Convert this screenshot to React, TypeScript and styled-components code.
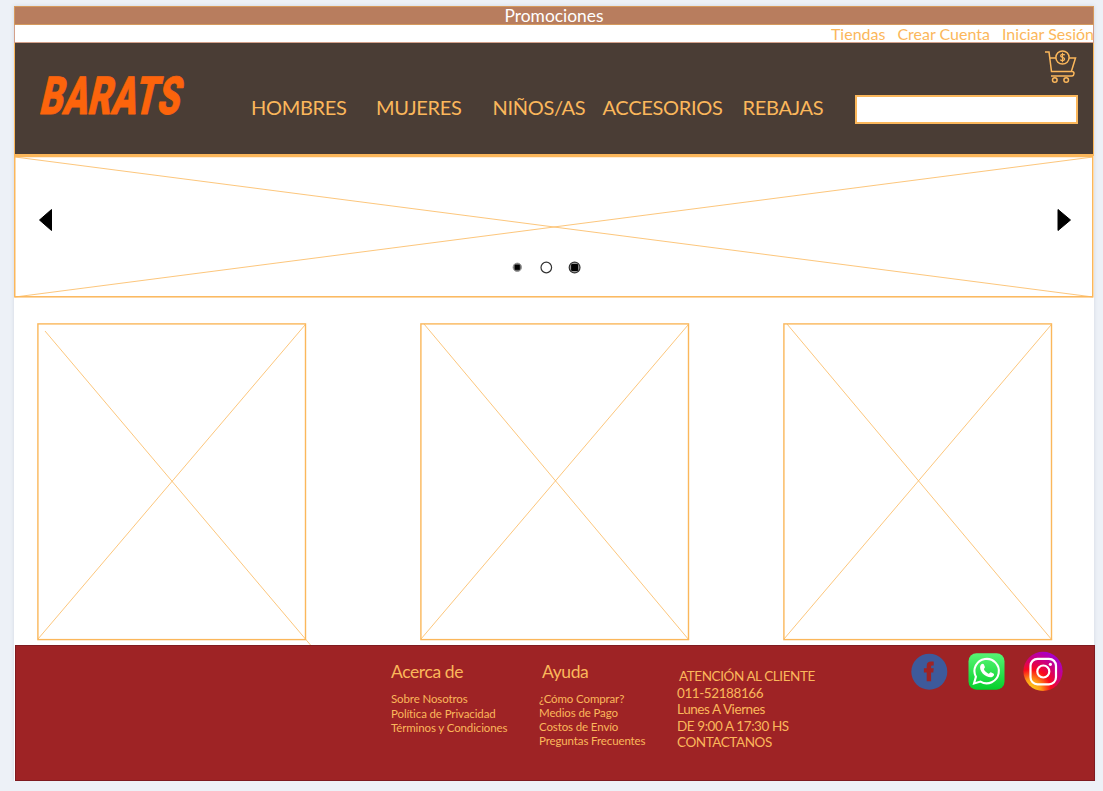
import React from "react";
import styled, { createGlobalStyle } from "styled-components";

const Global = createGlobalStyle`
  * { box-sizing: border-box; }
  body { margin: 0; background: #edf1f7; font-family: Lato, sans-serif; font-variant-ligatures: none; }
`;

const AMBER = "#fbb75b";

const Page = styled.div`
  width: 1080px;
  height: 775px;
  margin: 6px 0 0 14px;
  background: #fff;
  box-shadow: 0 0 4px rgba(60, 80, 120, 0.16);
  display: flex;
  flex-direction: column;
`;

const Promo = styled.div`
  height: 19px;
  flex: none;
  background: #b87d5e;
  border: 1px solid #d59a5e;
  color: #fff;
  font-size: 17.4px;
  line-height: 17px;
  text-align: center;
`;

const Account = styled.nav`
  height: 18px;
  flex: none;
  display: flex;
  justify-content: flex-end;
  gap: 12px;
  border: solid #d3a08a;
  border-width: 0 1px 1px 1px;
  color: ${AMBER};
  font-size: 16px;
  line-height: 18px;

  span:last-child {
    margin-right: -1px;
  }
`;

const Header = styled.header`
  height: 113px;
  flex: none;
  display: flex;
  background: #4a3d35;
  border: solid ${AMBER};
  border-width: 0 1px 2px 1px;
  padding: 0 15px 0 22px;
`;

const Logo = styled.svg`
  width: 170px;
  height: 54px;
  margin-top: 25px;
  flex: none;
  overflow: visible;
`;

const Menu = styled.nav`
  display: flex;
  margin: 52px 0 0 44px;
  color: ${AMBER};
  font-size: 20px;
  letter-spacing: -0.3px;
  line-height: 24px;
`;

const MenuItem = styled.a<{ $w: number }>`
  width: ${(p) => p.$w}px;
  flex: none;
  white-space: nowrap;
`;

const Tools = styled.div`
  margin-left: auto;
  display: flex;
  flex-direction: column;
  align-items: flex-end;
  padding-top: 6px;
  gap: 11px;
`;

const Search = styled.input`
  width: 223px;
  height: 29px;
  background: #fff;
  border: 2px solid ${AMBER};
  border-radius: 0;
  outline: none;
`;

const CartIcon = styled.svg`
  width: 34px;
  height: 35px;
`;

const Hero = styled.section`
  height: 142px;
  flex: none;
`;

const HeroArt = styled.svg`
  display: block;
`;

const Gallery = styled.main`
  height: 347px;
  flex: none;
  display: flex;
  padding: 25px 0 0 23px;
`;

const Card = styled.svg<{ $gap: number }>`
  width: 270px;
  height: 318px;
  flex: none;
  overflow: visible;
  margin-right: ${(p) => p.$gap}px;
`;

const Footer = styled.footer`
  width: 1080px;
  height: 136px;
  flex: none;
  margin-left: 1px;
  display: flex;
  background: #9e2325;
  border: 1px solid #7f1b20;
  color: ${AMBER};
  padding-left: 375px;
`;

const Column = styled.div<{ $w: number }>`
  width: ${(p) => p.$w}px;
  flex: none;
  padding-top: 15px;
  white-space: nowrap;
`;

const Title = styled.h2<{ $indent?: number }>`
  margin: 0 0 9px;
  padding-left: ${(p) => p.$indent ?? 0}px;
  font-size: 17.5px;
  font-weight: 400;
  letter-spacing: -0.4px;
  line-height: 22px;
`;

const Links = styled.div<{ $line: number }>`
  font-size: 11.5px;
  letter-spacing: -0.12px;
  line-height: ${(p) => p.$line}px;
`;

const Contact = styled.div`
  width: 234px;
  flex: none;
  padding-top: 22px;
  font-size: 13.5px;
  letter-spacing: -0.42px;
  line-height: 16.5px;
  white-space: nowrap;
`;

const FirstLine = styled.div`
  padding-left: 2px;
`;

const Social = styled.div`
  display: flex;
  gap: 18.5px;
  padding-top: 6px;
`;

const Badge = styled.svg`
  width: 38px;
  height: 40px;
  flex: none;
  overflow: visible;
`;

const menu: [string, number][] = [
  ["HOMBRES", 125],
  ["MUJERES", 116.5],
  ["NIÑOS/AS", 110],
  ["ACCESORIOS", 140],
  ["REBAJAS", 90],
];

const cards = [
  { gap: 113, from: [8, 8], to: [273.5, 322] },
  { gap: 93, from: [4, 1], to: [269, 317] },
  { gap: 0, from: [4, 1], to: [269, 317] },
];

export default function App() {
  return (
    <>
      <Global />
      <Page>
        <Promo>Promociones</Promo>
        <Account>
          <span>Tiendas</span>
          <span>Crear Cuenta</span>
          <span>Iniciar Sesión</span>
        </Account>
        <Header>
          <Logo viewBox="0 0 170 54">
            <text
              transform="translate(1.2 45.8) skewX(-13)"
              fontFamily="Roboto, sans-serif"
              fontWeight="900"
              fontSize="52.5"
              fill="#fc640c"
              stroke="#fc640c"
              strokeWidth="0.8"
              strokeLinejoin="round"
              textLength="140"
              lengthAdjust="spacingAndGlyphs"
            >
              BARATS
            </text>
          </Logo>
          <Menu>
            {menu.map(([label, w]) => (
              <MenuItem key={label} $w={w}>{label}</MenuItem>
            ))}
          </Menu>
          <Tools>
            <CartIcon viewBox="0 0 34 35" fill="none" stroke={AMBER} strokeWidth="1.5">
              <path d="M1 3h4l2.500 19.500h20.500q2 0 2 2t-2 2.500H7M6 9h6M25 9h6.500l-4 13" />
              <circle cx="18.500" cy="8.500" r="6.600" />
              <path d="M20.800 6.200c-1-1.500-4.400-1-4.200.7.2 1.800 4 1.300 4 3.200 0 1.800-3.300 2-4.300.5M18.500 3.800v9.400" strokeWidth="1.200" />
              <circle cx="10.800" cy="31" r="2.300" />
              <circle cx="22.200" cy="31" r="2.300" />
            </CartIcon>
            <Search aria-label="Buscar" />
          </Tools>
        </Header>
        <Hero>
          <HeroArt width="1080" height="142" viewBox="0 0 1080 142">
            <rect x="0.75" y="0.5" width="1078" height="140.3" fill="none" stroke={AMBER} strokeWidth="1.5" />
            <path d="M1 1L1079 141M1 141L1079 1" stroke={AMBER} strokeWidth="0.8" />
            <path d="M25.5 64L37.5 53.500V74.500ZM1056.500 64L1044 53.500V74.500Z" stroke="#000" strokeLinejoin="round" />
            <circle cx="503.3" cy="111.3" r="4.2" fill="#666" stroke="#999" strokeWidth="1" />
            <rect x="500.800" y="108.800" width="5" height="5" />
            <circle cx="532.3" cy="111.5" r="5.3" fill="#fff" stroke="#333" strokeWidth="1.2" />
            <circle cx="560.6" cy="111.5" r="5.4" fill="#999" stroke="#333" strokeWidth="1.2" />
            <rect x="557.1" y="108" width="7" height="7" rx="1" />
          </HeroArt>
        </Hero>
        <Gallery>
          {cards.map((c, i) => (
            <Card key={i} $gap={c.gap} viewBox="0 0 270 318">
              <rect x="0.9" y="0.9" width="267.6" height="315.7" fill="none" stroke={AMBER} strokeWidth="1.4" />
              <path
                d={`M${c.from.join(" ")}L${c.to.join(" ")}M1 316L268 2`}
                stroke={AMBER}
                strokeWidth="0.8"
              />
            </Card>
          ))}
        </Gallery>
        <Footer>
          <Column $w={148}>
            <Title>Acerca de</Title>
            <Links $line={14.5}>
              <div>Sobre Nosotros</div>
              <div>Política de Privacidad</div>
              <div>Términos y Condiciones</div>
            </Links>
          </Column>
          <Column $w={138}>
            <Title $indent={3}>Ayuda</Title>
            <Links $line={14}>
              <div>¿Cómo Comprar?</div>
              <div>Medios de Pago</div>
              <div>Costos de Envío</div>
              <div>Preguntas Frecuentes</div>
            </Links>
          </Column>
          <Contact>
            <FirstLine>ATENCIÓN AL CLIENTE</FirstLine>
            <div>011-52188166</div>
            <div>Lunes A Viernes</div>
            <div>DE 9:00 A 17:30 HS</div>
            <div>CONTACTANOS</div>
          </Contact>
          <Social>
            <Badge viewBox="0 0 38 40">
              <circle cx="18.3" cy="19.7" r="18" fill="#3d5a9b" />
              <path d="M15.700 29.200V20.500H12.900V16.200H15.700V14C15.700 10.800 17.500 9.600 20 9.600H22.700V13.500H21.300C20.200 13.500 20.100 14 20.100 15V16.200H22.700L22.300 20.500H20.100V29.200Z" fill="#9e2325" />
            </Badge>
            <Badge viewBox="0 0 38 40">
              <defs>
                <linearGradient id="wa" x1="0" y1="0" x2="0" y2="1">
                  <stop offset="0" stopColor="#57f675" />
                  <stop offset="1" stopColor="#05cf2b" />
                </linearGradient>
              </defs>
              <rect x="0.5" y="1.2" width="36" height="36.5" rx="8" fill="url(#wa)" />
              <path d="M6 31.5L7.9 24.8A12.2 12.2 0 1 1 12.5 29.6Z" fill="none" stroke="#fff" strokeWidth="2.1" />
              <path d="M13.3 12.3c1-1 2.2-.8 2.6.2l1 2.4c.3.8-1.2 1.7-1 2.4.9 2 2.5 3.5 4.6 4.4.8.2 1.6-1.7 2.4-1.4l2.5 1.2c1 .5.7 1.8 0 2.6-1.5 1.7-4 1.5-6.8.1-3-1.5-5.3-4-6.2-6.8-.6-2-.3-4 .9-5.1Z" fill="#fff" />
            </Badge>
            <Badge viewBox="0 0 38 40">
              <defs>
                <radialGradient id="ig" cx="0.18" cy="0.98" r="1.05">
                  <stop offset="0" stopColor="#ffd21f" />
                  <stop offset="0.25" stopColor="#ff9b15" />
                  <stop offset="0.5" stopColor="#fb0a1c" />
                  <stop offset="0.72" stopColor="#d4006e" />
                  <stop offset="1" stopColor="#a800c8" />
                </radialGradient>
              </defs>
              <circle cx="19" cy="19.3" r="19.6" fill="url(#ig)" />
              <rect x="6.5" y="6.8" width="25.5" height="25.5" rx="7" fill="none" stroke="#fff" strokeWidth="2.2" />
              <circle cx="19.3" cy="19.5" r="6" fill="none" stroke="#fff" strokeWidth="2.2" />
              <circle cx="26.400" cy="12.3" r="1.6" fill="#fff" />
            </Badge>
          </Social>
        </Footer>
      </Page>
    </>
  );
}
